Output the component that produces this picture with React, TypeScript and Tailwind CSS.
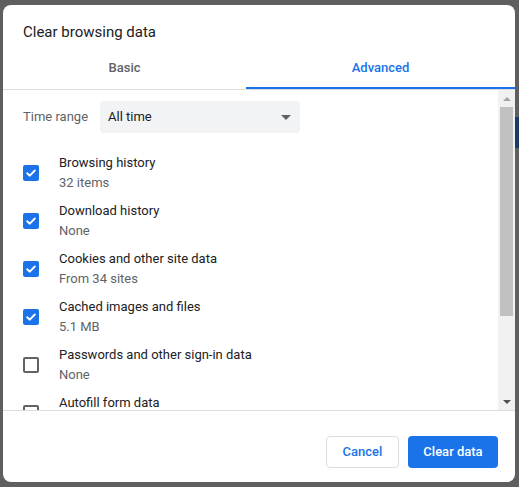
import React from "react";

const items = [
  { label: "Browsing history", sub: "32 items", checked: true },
  { label: "Download history", sub: "None", checked: true },
  { label: "Cookies and other site data", sub: "From 34 sites", checked: true },
  { label: "Cached images and files", sub: "5.1 MB", checked: true },
  { label: "Passwords and other sign-in data", sub: "None", checked: false },
  { label: "Autofill form data", sub: "None", checked: false },
];

function Checkbox({ checked }: { checked: boolean }) {
  if (checked) {
    return (
      <div className="w-[16px] h-[16px] rounded-[2px] bg-[#1a73e8] flex items-center justify-center shrink-0">
        <svg width="12" height="12" viewBox="0 0 12 12">
          <path d="M2.2 6.2 L4.8 8.7 L9.8 3.5" fill="none" stroke="#ffffff" strokeWidth="1.9" strokeLinecap="round" strokeLinejoin="round" />
        </svg>
      </div>
    );
  }
  return <div className="w-[16px] h-[16px] rounded-[2px] border-2 border-[#5f6368] shrink-0" />;
}

export default function App() {
  return (
    <div
      className="relative w-[519px] h-[487px] bg-[#5f5f5f] pl-[3px] pt-[5px] overflow-hidden"
      style={{ fontFamily: "Roboto, 'Noto Sans', Arial, sans-serif" }}
    >
      <div className="absolute right-0 top-[117px] w-[4px] h-[31px] bg-[#1c3a66]" />
      <div className="relative w-[512px] h-[477px] bg-white rounded-[8px] flex flex-col overflow-hidden">
        {/* Title */}
        <div className="h-[44px] pl-[20px] pt-[17px] text-[15px] leading-[20px] text-[#202124]">
          Clear browsing data
        </div>
        {/* Tabs */}
        <div className="flex h-[41px] border-b border-[#dadce0]">
          <div className="w-[243px] flex items-center justify-center text-[13px] font-medium text-[#5f6368] pb-[2px]">
            Basic
          </div>
          <div className="flex-1 flex items-center justify-center text-[13px] font-medium text-[#1a73e8] border-b-2 border-[#1a73e8]">
            Advanced
          </div>
        </div>
        {/* Scroll area */}
        <div className="h-[321px] flex border-b border-[#dadce0]">
          <div className="flex-1 overflow-hidden pt-[11px]">
            <div className="flex items-center h-[32px] pl-[20px]">
              <div className="w-[77px] text-[13px] text-[#5f6368]">Time range</div>
              <div className="w-[200px] h-[32px] bg-[#f1f3f4] rounded-[4px] flex items-center justify-between pl-[8px] pr-[8px]">
                <span className="text-[13px] text-[#202124]">All time</span>
                <svg width="10" height="5" viewBox="0 0 10 5" className="mr-[1px]">
                  <path d="M0 0 L10 0 L5 5 Z" fill="#5f6368" />
                </svg>
              </div>
            </div>
            <div className="flex flex-col gap-[8px] pt-[20px]">
              {items.map((it) => (
                <div key={it.label} className="flex items-center pl-[20px] gap-[20px]">
                  <Checkbox checked={it.checked} />
                  <div className="flex flex-col text-[13px] leading-[20px]">
                    <span className="text-[#202124]">{it.label}</span>
                    <span className="text-[#5f6368]">{it.sub}</span>
                  </div>
                </div>
              ))}
            </div>
          </div>
          {/* Scrollbar */}
          <div className="w-[17px] bg-[#f1f1f1] flex flex-col items-center">
            <div className="h-[17px] flex items-center justify-center">
              <svg width="8" height="4" viewBox="0 0 8 4">
                <path d="M0 4 L8 4 L4 0 Z" fill="#a3a3a3" />
              </svg>
            </div>
            <div className="w-[13px] h-[209px] bg-[#c1c1c1]" />
            <div className="flex-1" />
            <div className="h-[17px] flex items-center justify-center">
              <svg width="8" height="4" viewBox="0 0 8 4">
                <path d="M0 0 L8 0 L4 4 Z" fill="#505050" />
              </svg>
            </div>
          </div>
        </div>
        {/* Footer */}
        <div className="flex-1 flex justify-end items-start pt-[25px] pr-[17px] gap-[9px]">
          <button className="w-[73px] h-[32px] rounded-[4px] border border-[#dadce0] bg-white text-[13px] font-medium text-[#1a73e8]">
            Cancel
          </button>
          <button className="w-[90px] h-[32px] rounded-[4px] bg-[#1a73e8] text-[13px] font-medium text-white">
            Clear data
          </button>
        </div>
      </div>
    </div>
  );
}
